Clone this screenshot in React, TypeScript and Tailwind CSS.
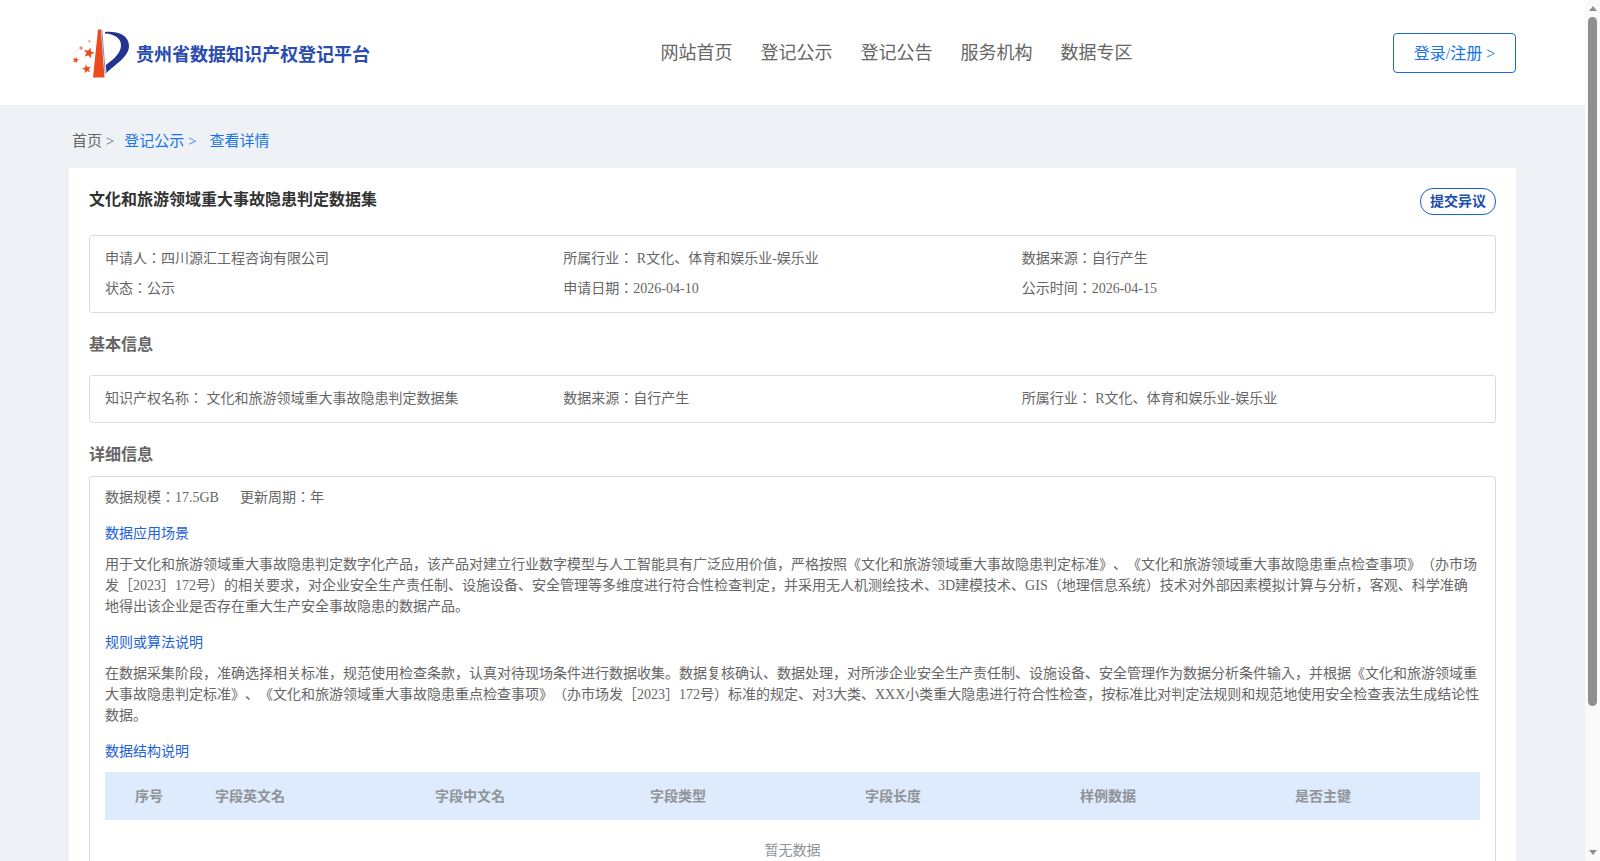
const FONT = '[font-family:"Liberation_Serif","Noto_Sans_CJK_JP",serif] [text-spacing-trim:space-all]';

const navItems = ['网站首页', '登记公示', '登记公告', '服务机构', '数据专区'];
const columns = ['字段英文名', '字段中文名', '字段类型', '字段长度', '样例数据', '是否主键'];

function starPoints(cx: number, cy: number, r: number, rot = 0) {
  const pts: string[] = [];
  for (let i = 0; i < 10; i++) {
    const rad = i % 2 === 0 ? r : r * 0.42;
    const a = ((i * 36 - 90 + rot) * Math.PI) / 180;
    pts.push(`${(cx + rad * Math.cos(a)).toFixed(2)},${(cy + rad * Math.sin(a)).toFixed(2)}`);
  }
  return pts.join(' ');
}

function Logo() {
  return (
    <svg width="60" height="52" viewBox="0 0 60 52" className="shrink-0">
      <polygon fill="#ea4a1c" points={starPoints(17, 26, 5.8, 15)} />
      <polygon fill="#ea4a1c" points={starPoints(14.7, 42, 4.8, -10)} />
      <polygon fill="#ea4a1c" points={starPoints(3.7, 33, 3.4, 10)} />
      <circle cx="9" cy="21" r="1.7" fill="#f0866a" />
      <circle cx="17.3" cy="14.2" r="1.2" fill="#f3a68f" />
      {/* mast */}
      <path fill="#ea4a1c" d="M26 2.500h2.900l3.600 48h-11.500z" />
      <path fill="none" stroke="#5a6fb8" strokeWidth="0.8" d="M29.800 3l3.500 44" />
      {/* P */}
      <path
        fill="#24338f"
        d="M33 5C45 4 57 8 57 19C57 30 42 38 34.500 46L33.800 38C42 32 49 26 49 18C49 11 42 7 33 6.500z"
      />
    </svg>
  );
}

function InfoCell({ children }: { children: React.ReactNode }) {
  return <div className="h-[30px] leading-[30px] whitespace-nowrap">{children}</div>;
}

function SubTitle({ children }: { children: React.ReactNode }) {
  return <h4 className="text-sm text-[#1e62d8] leading-[21px] mt-[15px] mb-[10px]">{children}</h4>;
}

export default function App() {
  return (
    <div className={`flex h-screen overflow-hidden bg-[#eef2f6] text-sm text-[#666] ${FONT}`}>
      <div className="flex-1 min-w-0">
        <header className="h-[105px] bg-white flex items-center justify-between pl-[72px] pr-[69px]">
          <div className="flex items-center w-[400px]">
            <Logo />
            <span className="ml-[4px] mt-[5px] text-lg font-bold text-[#2a4cb0]">贵州省数据知识产权登记平台</span>
          </div>
          <nav className="flex gap-[28px] text-lg text-[#666] -ml-[72px]">
            {navItems.map((item) => (
              <span key={item}>{item}</span>
            ))}
          </nav>
          <button className="w-[123px] h-10 pt-[2px] rounded border border-[#1a6ae0] text-base text-[#1a73e8]">
            登录/注册 &gt;
          </button>
        </header>

        <div className="pl-[69px] pr-[69px]">
          <div className="h-[63px] pl-[3px] pt-[11px] flex items-center text-[15px]">
            <span>首页 &gt;</span>
            <span className="ml-[10px] text-[#1a73e8]">登记公示 &gt;</span>
            <span className="ml-[13px] text-[#1a73e8]">查看详情</span>
          </div>

          <main className="bg-white px-5 pt-[20px] pb-5">
            <div className="flex items-start justify-between h-[47px]">
              <h2 className="text-base font-bold text-[#333] leading-6">文化和旅游领域重大事故隐患判定数据集</h2>
              <button className="w-[76px] h-[27px] rounded-[13px] border border-[#1a5fd0] text-sm font-bold text-[#1d4fb0]">
                提交异议
              </button>
            </div>

            <div className="border border-[#dcdcdc] rounded-[3px] px-[15px] py-2 grid grid-cols-3">
              <InfoCell>申请人：四川源汇工程咨询有限公司</InfoCell>
              <InfoCell>所属行业： R文化、体育和娱乐业-娱乐业</InfoCell>
              <InfoCell>数据来源：自行产生</InfoCell>
              <InfoCell>状态：公示</InfoCell>
              <InfoCell>申请日期：2026-04-10</InfoCell>
              <InfoCell>公示时间：2026-04-15</InfoCell>
            </div>

            <h3 className="text-base font-bold leading-6 mt-[20px] mb-[18px]">基本信息</h3>

            <div className="border border-[#dcdcdc] rounded-[3px] px-[15px] py-2 grid grid-cols-3">
              <InfoCell>知识产权名称： 文化和旅游领域重大事故隐患判定数据集</InfoCell>
              <InfoCell>数据来源：自行产生</InfoCell>
              <InfoCell>所属行业： R文化、体育和娱乐业-娱乐业</InfoCell>
            </div>

            <h3 className="text-base font-bold leading-6 mt-[20px] mb-[9px]">详细信息</h3>

            <div className="border border-[#dcdcdc] rounded-[3px] px-[15px] pt-[10px] pb-5">
              <div className="leading-[21px] flex gap-[21px]">
                <span>数据规模：17.5GB</span>
                <span>更新周期：年</span>
              </div>

              <SubTitle>数据应用场景</SubTitle>
              <p className="leading-[21px]">
                用于文化和旅游领域重大事故隐患判定数字化产品，该产品对建立行业数字模型与人工智能具有广泛应用价值，严格按照《文化和旅游领域重大事故隐患判定标准》、《文化和旅游领域重大事故隐患重点检查事项》（办市场发［2023］172号）的相关要求，对企业安全生产责任制、设施设备、安全管理等多维度进行符合性检查判定，并采用无人机测绘技术、3D建模技术、GIS（地理信息系统）技术对外部因素模拟计算与分析，客观、科学准确地得出该企业是否存在重大生产安全事故隐患的数据产品。
              </p>

              <SubTitle>规则或算法说明</SubTitle>
              <p className="leading-[21px]">
                在数据采集阶段，准确选择相关标准，规范使用检查条款，认真对待现场条件进行数据收集。数据复核确认、数据处理，对所涉企业安全生产责任制、设施设备、安全管理作为数据分析条件输入，并根据《文化和旅游领域重大事故隐患判定标准》、《文化和旅游领域重大事故隐患重点检查事项》（办市场发［2023］172号）标准的规定、对3大类、XXX小类重大隐患进行符合性检查，按标准比对判定法规则和规范地使用安全检查表法生成结论性数据。
              </p>

              <SubTitle>数据结构说明</SubTitle>
              <div className="grid grid-cols-[88px_220px_215px_215px_215px_215px_1fr] h-12 pt-[1px] items-center bg-[#deebfc] font-bold text-[#909399]">
                <span className="text-center">序号</span>
                {columns.map((col) => (
                  <span key={col} className="pl-[22px]">{col}</span>
                ))}
              </div>
              <div className="h-[60px] pt-[1px] flex items-center justify-center text-[#909399]">暂无数据</div>
            </div>
          </main>
        </div>
      </div>

      {/* native-looking scrollbar */}
      <div className="w-[15px] shrink-0 h-full bg-[#fafafa] flex flex-col items-center py-[6px]">
        <div className="w-0 h-0 border-x-[4px] border-x-transparent border-b-[5px] border-b-[#8f8f8f]" />
        <div className="w-[9px] h-[689px] mt-[6px] rounded-full bg-[#8f8f8f]" />
        <div className="flex-1" />
        <div className="w-0 h-0 border-x-[4px] border-x-transparent border-t-[5px] border-t-[#8f8f8f]" />
      </div>
    </div>
  );
}
